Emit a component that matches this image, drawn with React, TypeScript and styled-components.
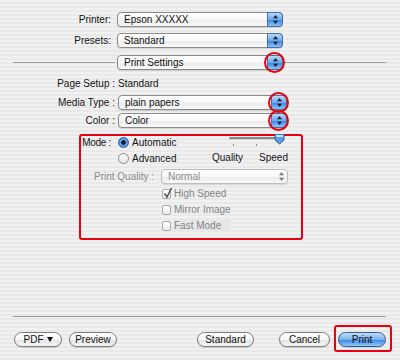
import styled, { createGlobalStyle } from "styled-components";

const GlobalStyle = createGlobalStyle`
  html, body { margin: 0; padding: 0; }
  body {
    font-family: "Liberation Sans", Arial, sans-serif;
    font-size: 10px;
    color: #141414;
  }
`;

const Window = styled.div`
  width: 400px;
  height: 360px;
  box-sizing: border-box;
  padding-top: 12px;
  display: flex;
  flex-direction: column;
  background: repeating-linear-gradient(
    to bottom,
    #f1f1f1 0px,
    #f1f1f1 2px,
    #e9e9e9 2px,
    #e9e9e9 4px
  );
  overflow: hidden;
`;

const Row = styled.div<{ $label: number; $gap: number; $top?: number }>`
  display: grid;
  grid-template-columns: ${(p) => p.$label}px auto;
  column-gap: ${(p) => p.$gap}px;
  align-items: center;
  margin-top: ${(p) => p.$top ?? 0}px;
  line-height: 13px;
`;

const Label = styled.span<{ $muted?: boolean }>`
  text-align: right;
  white-space: nowrap;
  color: ${(p) => (p.$muted ? "#8c8c8c" : "#141414")};
`;

const Popup = styled.div<{ $w: number; $disabled?: boolean }>`
  width: ${(p) => p.$w}px;
  height: 15px;
  box-sizing: border-box;
  display: flex;
  align-items: center;
  padding-left: 6px;
  border: 1px solid ${(p) => (p.$disabled ? "#bdbdbd" : "#8a8a8a")};
  border-radius: 4px;
  background: linear-gradient(#ffffff, #f7f7f7 50%, #ececec 55%, #f8f8f8);
  color: ${(p) => (p.$disabled ? "#8c8c8c" : "#111")};
  box-shadow: 0 1px 1px rgba(0, 0, 0, 0.12);
`;

const PopupText = styled.span`
  flex: 1;
  white-space: nowrap;
`;

const Stepper = styled.span`
  position: relative;
  align-self: stretch;
  width: 14px;
  margin: -1px -1px -1px 0;
  border: 1px solid #3f70b0;
  border-radius: 0 4px 4px 0;
  background: linear-gradient(#b9d8f7, #6ea8ea 50%, #3d88e0 55%, #8cc2f5);
  display: flex;
  align-items: center;
  justify-content: center;
`;

const PlainStepper = styled.span`
  width: 12px;
  display: flex;
  align-items: center;
  justify-content: center;
`;

const Ring = styled.span`
  position: absolute;
  left: -4px;
  top: -4px;
  width: 21px;
  height: 21px;
  box-sizing: border-box;
  border: 2px solid #e8000c;
  border-radius: 50%;
  pointer-events: none;
`;

const Separator = styled.div<{ $grow?: boolean; $w?: number }>`
  height: 1px;
  background: #9c9c9c;
  flex: ${(p) => (p.$grow ? 1 : "none")};
  width: ${(p) => (p.$w ? `${p.$w}px` : "auto")};
`;

const SettingsBar = styled.div`
  display: flex;
  align-items: center;
  margin: 7px 14px 0 13px;
  gap: 2px;
`;

const Frame = styled.div`
  width: 224px;
  height: 106px;
  box-sizing: border-box;
  margin: 6px 0 0 79px;
  border: 2px solid #ec0010;
  border-radius: 3px;
  display: flex;
  flex-direction: column;
`;

const ModeRow = styled.div`
  display: flex;
  align-items: flex-start;
  line-height: 13px;
`;

const ModeLabel = styled.span`
  width: 30px;
  text-align: right;
  white-space: nowrap;
  margin-right: 7px;
  letter-spacing: -0.3px;
`;

const RadioGroup = styled.div`
  width: 93px;
  display: flex;
  flex-direction: column;
  gap: 3px;
`;

const Option = styled.label`
  display: flex;
  align-items: center;
  gap: 3px;
  height: 13px;
  white-space: nowrap;
`;

const RadioDot = styled.span<{ $on?: boolean }>`
  width: 11px;
  height: 11px;
  box-sizing: border-box;
  border-radius: 50%;
  border: 1px solid ${(p) => (p.$on ? "#2d5e9e" : "#8a8a8a")};
  background: ${(p) =>
    p.$on
      ? "radial-gradient(circle, #0d1a2c 0 2px, #6aa6ea 2.5px, #3b82d8 100%)"
      : "linear-gradient(#ffffff, #e6e6e6)"};
`;

const SliderBlock = styled.div`
  width: 78px;
  margin-top: -2px;
  display: flex;
  flex-direction: column;
`;

const SliderLabels = styled.div`
  display: flex;
  justify-content: space-between;
  line-height: 13px;
  padding: 0 1px 0 1px;
`;

const CheckList = styled.div`
  margin: 3px 0 0 81px;
  display: flex;
  flex-direction: column;
  gap: 3px;
`;

const Check = styled.label<{ $shade?: boolean }>`
  display: flex;
  align-items: center;
  gap: 3px;
  height: 13px;
  color: #858585;
  white-space: nowrap;
  span:last-child {
    background: ${(p) => (p.$shade ? "#e6e6e6" : "transparent")};
    padding-right: ${(p) => (p.$shade ? "9px" : "0")};
  }
`;

const Box = styled.span`
  position: relative;
  width: 9px;
  height: 10px;
  box-sizing: border-box;
  border: 1px solid #a8a8a8;
  border-radius: 2px;
  background: linear-gradient(#ffffff, #ececec);
`;

const Tick = styled.svg`
  position: absolute;
  left: 0px;
  top: -3px;
`;

const Footer = styled.div`
  margin-top: auto;
  padding: 0 14px 13px 13px;
  display: flex;
  flex-direction: column;
`;

const ButtonRow = styled.div`
  margin-top: 15px;
  display: flex;
  align-items: center;
  padding-left: 1px;
`;

const Button = styled.button<{ $w: number; $left?: number; $primary?: boolean }>`
  position: relative;
  width: ${(p) => p.$w}px;
  height: 15px;
  margin-left: ${(p) => p.$left ?? 0}px;
  padding: 0;
  box-sizing: border-box;
  border-radius: 8px;
  font-family: "Liberation Sans", Arial, sans-serif;
  font-size: 10px;
  color: #111;
  display: flex;
  align-items: center;
  justify-content: center;
  gap: 3px;
  border: 1px solid ${(p) => (p.$primary ? "#2f5f9c" : "#7c7c7c")};
  background: ${(p) =>
    p.$primary
      ? "linear-gradient(#c2ddf8, #78b1ee 50%, #3f8ae2 55%, #93c8f6)"
      : "linear-gradient(#ffffff, #f5f5f5 50%, #e4e4e4 55%, #f7f7f7)"};
  box-shadow: 0 1px 1px rgba(0, 0, 0, 0.15);
`;

const Highlight = styled.span`
  position: absolute;
  left: -5px;
  right: -7px;
  top: -8px;
  bottom: -6px;
  border: 2px solid #ec0010;
  border-radius: 3px;
  pointer-events: none;
`;

const Arrows = ({ color = "#10203a" }: { color?: string }) => (
  <svg width="5" height="9" viewBox="0 0 5 9">
    <path d="M2.5 0 L5 3.2 L0 3.2 Z" fill={color} />
    <path d="M0 5.8 L5 5.8 L2.5 9 Z" fill={color} />
  </svg>
);

const SelectBox = ({
  value,
  w,
  ring,
  disabled,
}: {
  value: string;
  w: number;
  ring?: boolean;
  disabled?: boolean;
}) => (
  <Popup $w={w} $disabled={disabled}>
    <PopupText>{value}</PopupText>
    {disabled ? (
      <PlainStepper>
        <Arrows color="#7a7a7a" />
      </PlainStepper>
    ) : (
      <Stepper>
        <Arrows />
        {ring && <Ring />}
      </Stepper>
    )}
  </Popup>
);

const Slider = () => (
  <svg width="78" height="17" viewBox="0 0 78 17">
    <rect x="18" y="3" width="52" height="2" rx="1" fill="#8a8a8a" />
    <rect x="18" y="5" width="52" height="1" fill="#d0d0d0" />
    <rect x="22" y="10" width="1" height="2" fill="#8a8a8a" />
    <rect x="45" y="10" width="1" height="2" fill="#8a8a8a" />
    <path
      d="M64 1 Q64 0 65 0 L72 0 Q73 0 73 1 L73 6 L68.5 10 L64 6 Z"
      fill="#5c9de6"
      stroke="#2f5f9c"
      strokeWidth="1"
    />
    <rect x="65" y="1" width="7" height="2" fill="#c6e0fa" />
  </svg>
);

export default function App() {
  return (
    <>
      <GlobalStyle />
      <Window>
        <Row $label={111} $gap={6}>
          <Label>Printer:</Label>
          <SelectBox value="Epson XXXXX" w={166} />
        </Row>
        <Row $label={111} $gap={6} $top={6}>
          <Label>Presets:</Label>
          <SelectBox value="Standard" w={166} />
        </Row>
        <SettingsBar>
          <Separator $w={102} />
          <SelectBox value="Print Settings" w={166} ring />
          <Separator $grow />
        </SettingsBar>
        <Row $label={115} $gap={3} $top={7}>
          <Label>Page Setup :</Label>
          <span>Standard</span>
        </Row>
        <Row $label={115} $gap={3} $top={5}>
          <Label>Media Type :</Label>
          <SelectBox value="plain papers" w={169} ring />
        </Row>
        <Row $label={115} $gap={3} $top={3}>
          <Label>Color :</Label>
          <SelectBox value="Color" w={169} ring />
        </Row>
        <Frame>
          <ModeRow>
            <ModeLabel>Mode :</ModeLabel>
            <RadioGroup>
              <Option>
                <RadioDot $on />
                <span>Automatic</span>
              </Option>
              <Option>
                <RadioDot />
                <span>Advanced</span>
              </Option>
            </RadioGroup>
            <SliderBlock>
              <Slider />
              <SliderLabels>
                <span>Quality</span>
                <span>Speed</span>
              </SliderLabels>
            </SliderBlock>
          </ModeRow>
          <Row $label={73} $gap={7} $top={4}>
            <Label $muted>Print Quality :</Label>
            <SelectBox value="Normal" w={127} disabled />
          </Row>
          <CheckList>
            <Check>
              <Box>
                <Tick width="10" height="12" viewBox="0 0 10 12">
                  <path
                    d="M1.5 6.5 L4 10 L8.5 1"
                    stroke="#555"
                    strokeWidth="1.6"
                    fill="none"
                  />
                </Tick>
              </Box>
              <span>High Speed</span>
            </Check>
            <Check>
              <Box />
              <span>Mirror Image</span>
            </Check>
            <Check $shade>
              <Box />
              <span>Fast Mode</span>
            </Check>
          </CheckList>
        </Frame>
        <Footer>
          <Separator />
          <ButtonRow>
            <Button $w={48}>
              PDF
              <svg width="6" height="5" viewBox="0 0 6 5">
                <path d="M0 0 L6 0 L3 5 Z" fill="#111" />
              </svg>
            </Button>
            <Button $w={48} $left={7}>
              Preview
            </Button>
            <Button $w={57} $left={80}>
              Standard
            </Button>
            <Button $w={51} $left={25}>
              Cancel
            </Button>
            <Button $w={48} $left={8} $primary>
              Print
              <Highlight />
            </Button>
          </ButtonRow>
        </Footer>
      </Window>
    </>
  );
}
